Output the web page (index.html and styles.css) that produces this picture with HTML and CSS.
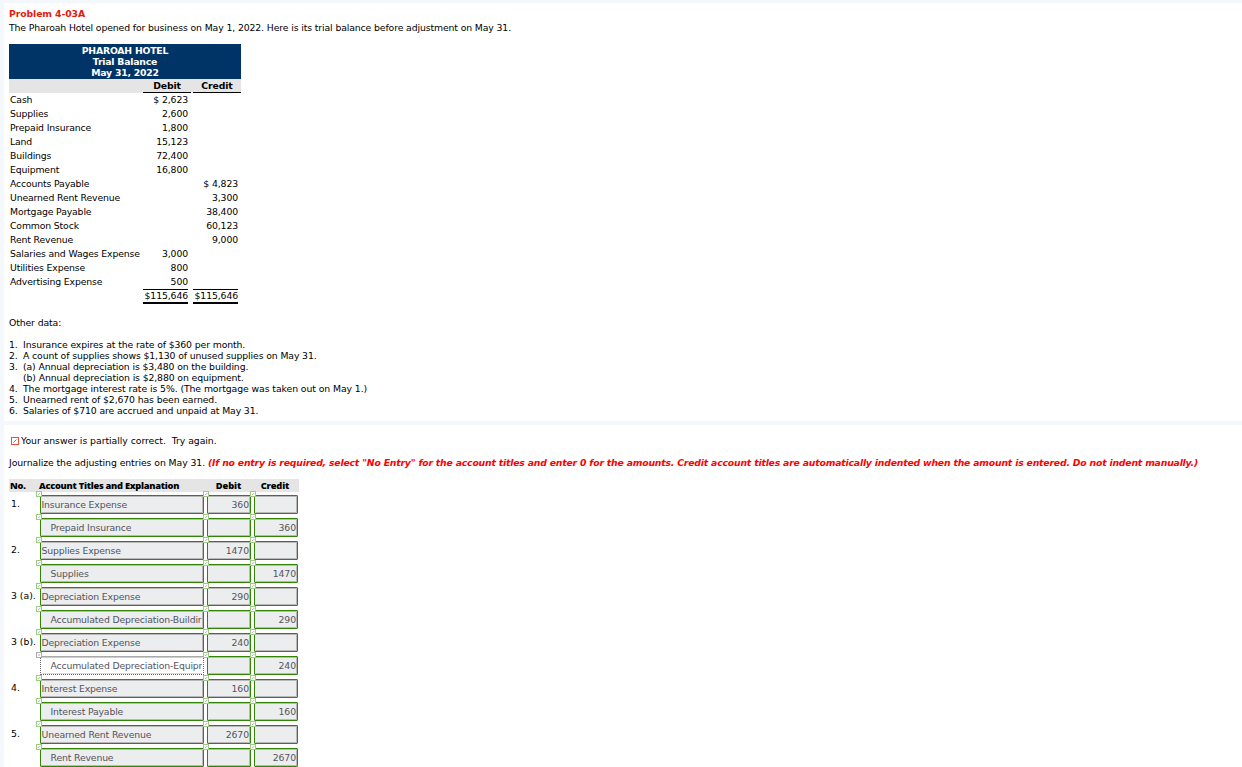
FILE: index.html
```html
<!DOCTYPE html>
<html lang="en">
<head>
<meta charset="utf-8">
<title>Problem 4-03A</title>
<link rel="stylesheet" href="styles.css">
</head>
<body>
<section class="panel problem">
<h1 class="heading">Problem 4-03A</h1>
<p class="intro">The Pharoah Hotel opened for business on May 1, 2022. Here is its trial balance before adjustment on May 31.</p>
<div class="balance">
<div class="caption"><div>PHAROAH HOTEL</div><div>Trial Balance</div><div>May 31, 2022</div></div>
<div class="brow bhead"><span></span><b>Debit</b><b>Credit</b></div>
<div class="brow"><span>Cash</span><span class="amt">$ 2,623</span><span class="amt"></span></div>
<div class="brow"><span>Supplies</span><span class="amt">2,600</span><span class="amt"></span></div>
<div class="brow"><span>Prepaid Insurance</span><span class="amt">1,800</span><span class="amt"></span></div>
<div class="brow"><span>Land</span><span class="amt">15,123</span><span class="amt"></span></div>
<div class="brow"><span>Buildings</span><span class="amt">72,400</span><span class="amt"></span></div>
<div class="brow"><span>Equipment</span><span class="amt">16,800</span><span class="amt"></span></div>
<div class="brow"><span>Accounts Payable</span><span class="amt"></span><span class="amt">$ 4,823</span></div>
<div class="brow"><span>Unearned Rent Revenue</span><span class="amt"></span><span class="amt">3,300</span></div>
<div class="brow"><span>Mortgage Payable</span><span class="amt"></span><span class="amt">38,400</span></div>
<div class="brow"><span>Common Stock</span><span class="amt"></span><span class="amt">60,123</span></div>
<div class="brow"><span>Rent Revenue</span><span class="amt"></span><span class="amt">9,000</span></div>
<div class="brow"><span>Salaries and Wages Expense</span><span class="amt">3,000</span><span class="amt"></span></div>
<div class="brow"><span>Utilities Expense</span><span class="amt">800</span><span class="amt"></span></div>
<div class="brow"><span>Advertising Expense</span><span class="amt">500</span><span class="amt"></span></div>
<div class="brow total"><span></span><span class="sum">$115,646</span><span class="sum">$115,646</span></div>
</div>
<p class="other">Other data:</p>
<ol class="facts">
<li><span>1.</span><span>Insurance expires at the rate of $360 per month.</span></li>
<li><span>2.</span><span>A count of supplies shows $1,130 of unused supplies on May 31.</span></li>
<li><span>3.</span><span>(a) Annual depreciation is $3,480 on the building.</span></li>
<li><span></span><span>(b) Annual depreciation is $2,880 on equipment.</span></li>
<li><span>4.</span><span class="wide">The mortgage interest rate is 5%. (The mortgage was taken out on May 1.)</span></li>
<li><span>5.</span><span>Unearned rent of $2,670 has been earned.</span></li>
<li><span>6.</span><span>Salaries of $710 are accrued and unpaid at May 31.</span></li>
</ol>
</section>
<section class="panel answer">
<p class="status"><svg class="mark" viewBox="0 0 8 8"><rect x=".5" y=".5" width="7" height="7"/><path d="M2.5 5.5 5.5 2.5"/></svg><span>Your answer is partially correct.&nbsp; Try again.</span></p>
<p class="task"><span class="lead">Journalize the adjusting entries on May 31.</span> <em>(If no entry is required, select "No Entry" for the account titles and enter 0 for the amounts. Credit account titles are automatically indented when the amount is entered. Do not indent manually.)</em></p>
<div class="jhead"><b>No.</b><b>Account Titles and Explanation</b><b class="c">Debit</b><b class="c">Credit</b></div>
<div class="journal" id="journal"></div>
</section>
<script src="journal.js"></script>
</body>
</html>
```
FILE: styles.css
```css
html, body { margin: 0; height: 767px; overflow: hidden; }
body { background: #f4f8fc; font: 9.3px/11px Verdana, "DejaVu Sans", sans-serif; letter-spacing: -.115px; color: #000; padding: 3px 0 0 4px; box-sizing: border-box; }
p, h1, ol { margin: 0; padding: 0; }
.panel { background: #fff; box-sizing: border-box; padding-left: 5px; white-space: nowrap; }
.problem { height: 418px; padding-top: 4px; }
.heading { font-size: 9.3px; line-height: 14px; letter-spacing: -.1px; color: #e21b0c; }
.intro { line-height: 14px; }
.balance { width: 232px; margin-top: 9px; }
.caption { background: #003366; color: #fff; font-weight: bold; text-align: center; height: 35px; padding-top: 1px; box-sizing: border-box; letter-spacing: -.2px; }
.brow { display: grid; grid-template-columns: 132px 48px 48px; column-gap: 2px; height: 14px; line-height: 14px; }
.brow > span:first-child { padding-left: 1px; letter-spacing: -.14px; }
.amt { text-align: right; padding-right: 3px; }
.bhead { background: #e5e5e5; }
.bhead b { text-align: center; border-bottom: 1px solid #000; height: 13px; }
.total { height: 16px; }
.sum { text-align: right; border-top: 1px solid #000; border-bottom: 2px solid #000; margin-right: 3px; height: 12px; line-height: 12px; }
.other { margin-top: 12px; }
.facts { list-style: none; margin-top: 11px; }
.facts li { display: grid; grid-template-columns: 14px 1fr; height: 11px; }
.wide { letter-spacing: -.08px; }
.answer { margin-top: 4px; height: 342px; padding-top: 10px; overflow: hidden; }
.status { display: flex; align-items: center; gap: 2px; padding-left: 2px; letter-spacing: -.04px; }
.mark { width: 8px; height: 8px; fill: none; stroke: #e8503c; stroke-width: 1; }
.task { margin-top: 11px; letter-spacing: -.07px; }
.task em { color: #f00; font-weight: bold; letter-spacing: -.195px; }
.jhead { display: grid; grid-template-columns: 29px 168px 43px 50px; width: 290px; height: 13px; margin-top: 11px; background: #e5e5e5; box-sizing: border-box; padding-left: 1px; font: bold 9.3px/13px "Noto Sans", sans-serif; letter-spacing: -.27px; }
.jhead .c { text-align: center; letter-spacing: -.1px; }
.journal { padding-top: 3px; }
.jrow { display: grid; grid-template-columns: 28px 164px 44px 44px; column-gap: 3px; height: 19px; margin-bottom: 4px; }
.no { line-height: 18px; padding-left: 2px; letter-spacing: 0; }
.cell { position: relative; box-sizing: border-box; height: 19px; border: 1px solid #338605; border-radius: 1px; }
.field { box-sizing: border-box; height: 17px; background: #ebedef; border: 1px solid #b9bab8; border-left-color: #ebedef; color: #54545c; line-height: 16px; overflow: hidden; letter-spacing: -.15px; }
.num { text-align: right; letter-spacing: -.08px; }
.indent { padding-left: 9px; }
.field:not(.num) { text-indent: -.5px; }
.badge { position: absolute; left: -5px; top: -5px; width: 6px; height: 6px; fill: #fff; stroke: #9dca85; stroke-width: 1; }
.pending { border: 1px dotted #666; border-top: 1px solid #aaa; }
.pending .field { background: #fff; border-color: #ccc #fff #ddd; }
.pending .badge { stroke: #aaa; }
```
FILE: journal.js
```javascript
const rows = [
  ["1.", "Insurance Expense", "360", ""], ["", "Prepaid Insurance", "", "360"],
  ["2.", "Supplies Expense", "1470", ""], ["", "Supplies", "", "1470"],
  ["3 (a).", "Depreciation Expense", "290", ""], ["", "Accumulated Depreciation-Buildir", "", "290"],
  ["3 (b).", "Depreciation Expense", "240", ""], ["", "Accumulated Depreciation-Equipr", "", "240"],
  ["4.", "Interest Expense", "160", ""], ["", "Interest Payable", "", "160"],
  ["5.", "Unearned Rent Revenue", "2670", ""], ["", "Rent Revenue", "", "2670"]
];
const badge = (mark) => `<svg class="badge" viewBox="0 0 6 6"><rect x=".5" y=".5" width="5" height="5"/><path d="${mark}"/></svg>`;
const check = "M2 3.5h1L4.2 2";
const dot = "M2 3h2";
const cell = (text, fieldClass, pending) => `<div class="cell ${pending ? "pending" : ""}"><div class="field ${fieldClass}">${text}</div>${badge(pending ? dot : check)}</div>`;
document.getElementById("journal").innerHTML = rows.map(([no, title, debit, credit], i) =>
  `<div class="jrow"><span class="no">${no}</span>${cell(title, i % 2 ? "indent" : "", i === 7)}${cell(debit, "num")}${cell(credit, "num")}</div>`).join("");
```
